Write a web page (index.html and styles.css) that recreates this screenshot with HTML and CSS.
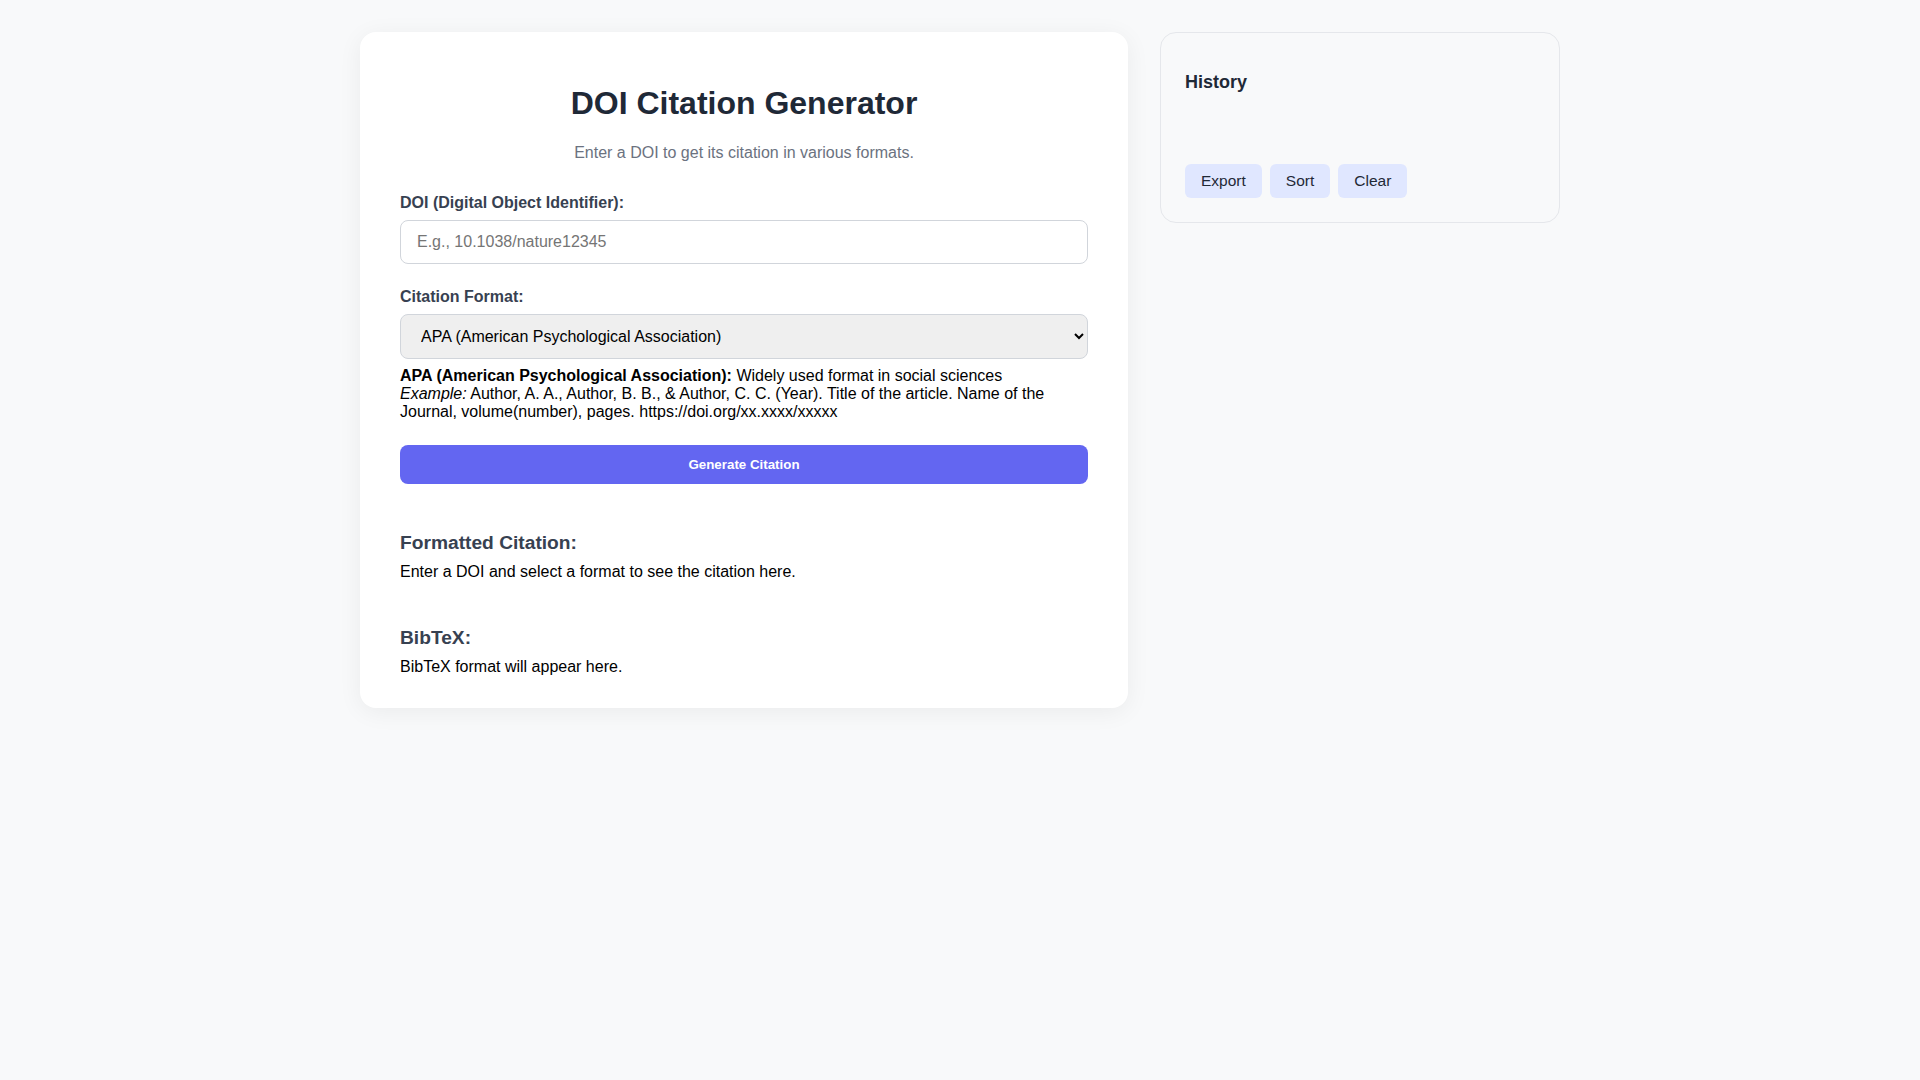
FILE: index.html
```html
<!DOCTYPE html>
<html lang="en">
<head>
<meta charset="utf-8">
<title>DOI Citation Generator</title>
<link rel="stylesheet" href="styles.css">
</head>
<body>
<div class="container">
  <main class="main-card">
    <h1 class="title">DOI Citation Generator</h1>
    <p class="subtitle">Enter a DOI to get its citation in various formats.</p>

    <div class="form-group">
      <label class="label" for="doi">DOI (Digital Object Identifier):</label>
      <input class="text-input" id="doi" type="text" placeholder="E.g., 10.1038/nature12345">
    </div>

    <div class="form-group">
      <label class="label" for="format">Citation Format:</label>
      <select class="select" id="format">
        <option>APA (American Psychological Association)</option>
      </select>
      <div class="format-desc">
        <strong>APA (American Psychological Association):</strong> Widely used format in social sciences<br>
        <em>Example:</em> Author, A. A., Author, B. B., &amp; Author, C. C. (Year). Title of the article. Name of the Journal, volume(number), pages. https://doi.org/xx.xxxx/xxxxx
      </div>
    </div>

    <button class="primary-btn" type="button">Generate Citation</button>

    <section class="result">
      <h3 class="result-title">Formatted Citation:</h3>
      <p class="result-text">Enter a DOI and select a format to see the citation here.</p>
    </section>

    <section class="result">
      <h3 class="result-title">BibTeX:</h3>
      <p class="result-text">BibTeX format will appear here.</p>
    </section>
  </main>

  <aside class="history-card">
    <h3 class="history-title">History</h3>
    <div class="history-list"></div>
    <div class="history-actions">
      <button class="small-btn" type="button">Export</button>
      <button class="small-btn" type="button">Sort</button>
      <button class="small-btn" type="button">Clear</button>
    </div>
  </aside>
</div>
</body>
</html>
```

FILE: styles.css
```css
* {
  box-sizing: border-box;
}

body {
  margin: 0;
  padding: 32px;
  background: #f8f9fa;
  font-family: "Liberation Sans", Arial, sans-serif;
  color: #000;
}

.container {
  max-width: 1200px;
  margin: 0 auto;
  display: flex;
  gap: 32px;
  align-items: flex-start;
}

.main-card {
  flex: 1;
  background: #ffffff;
  border-radius: 16px;
  padding: 32px 40px 32px;
  box-shadow: 0 4px 24px rgba(0, 0, 0, 0.06);
}

.title {
  margin: 21.44px 0;
  font-size: 32px;
  font-weight: bold;
  text-align: center;
  color: #1f2937;
}

.subtitle {
  margin: 0 0 32px;
  font-size: 16px;
  text-align: center;
  color: #6b7280;
}

.form-group {
  margin-bottom: 24px;
}

.label {
  display: block;
  margin-bottom: 8px;
  font-size: 16px;
  font-weight: bold;
  color: #374151;
}

.text-input {
  display: block;
  width: 100%;
  padding: 12px 16px;
  font-family: "Liberation Sans", Arial, sans-serif;
  font-size: 16px;
  border: 1px solid #d1d5db;
  border-radius: 8px;
  background: #fff;
  color: #111827;
}

.text-input::placeholder {
  color: #757575;
}

.select {
  display: block;
  width: 100%;
  padding: 12px 16px;
  font-family: "Liberation Sans", Arial, sans-serif;
  font-size: 16px;
  border: 1px solid #d1d5db;
  border-radius: 8px;
  background-color: #efefef;
  color: #000;
}

.format-desc {
  margin-top: 8px;
  font-size: 16px;
  line-height: normal;
}

.primary-btn {
  display: block;
  width: 100%;
  padding: 12px;
  border: none;
  border-radius: 8px;
  background: #6366f1;
  color: #ffffff;
  font-family: "Liberation Sans", Arial, sans-serif;
  font-size: 13.33px;
  font-weight: bold;
}

.result {
  margin-top: 48.2px;
}

.result + .result {
  margin-top: 46.5px;
}

.result-title {
  margin: 0 0 8.5px;
  font-size: 19.2px;
  font-weight: bold;
  color: #374151;
}

.result-text {
  margin: 0;
  font-size: 16px;
}

.history-card {
  width: 400px;
  flex-shrink: 0;
  border: 1px solid #e5e7eb;
  border-radius: 16px;
  padding: 24px;
  background: #f8f9fa;
}

.history-title {
  margin: 15px 0 16px;
  font-size: 18px;
  font-weight: bold;
  color: #1f2937;
}

.history-list {
  min-height: 39px;
  margin-bottom: 16px;
}

.history-actions {
  display: flex;
  gap: 8px;
}

.small-btn {
  padding: 8px 16px;
  border: none;
  border-radius: 6px;
  background: #e0e7ff;
  color: #1f2937;
  font-family: "Liberation Sans", Arial, sans-serif;
  font-size: 15.5px;
}
```
